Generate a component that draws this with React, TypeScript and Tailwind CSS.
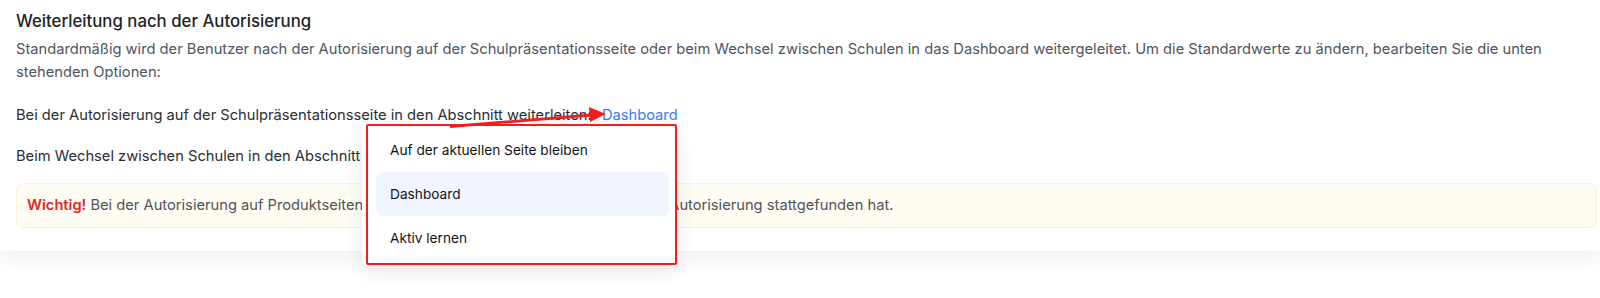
import { Fragment } from "react";

const font = { fontFamily: "Inter, 'Noto Sans', sans-serif" };

const options = ["Auf der aktuellen Seite bleiben", "Dashboard", "Aktiv lernen"];

// Dropdown menu with the red annotation frame around it.
function RedirectMenu() {
  return (
    <div className="absolute left-[362px] top-[124px] rounded-md bg-white pl-1 shadow-[0_6px_18px_rgba(30,40,80,0.10)]">
      <div className="w-[311px] rounded-[2px] border-2 border-[#f21d1d] bg-white pb-[3px] pl-2 pr-1.5 pt-[2px]">
        {options.map((o) => (
          <div
            key={o}
            className={
              "flex h-[44px] items-center rounded-md pl-[14px] text-[13.7px] text-[#141414] " +
              (o === "Dashboard" ? "bg-[#f0f5ff]" : "")
            }
          >
            {o}
          </div>
        ))}
      </div>
    </div>
  );
}

// Red annotation arrow pointing at the "Dashboard" link.
function Arrow() {
  return (
    <svg
      className="pointer-events-none absolute left-0 top-0"
      width="700"
      height="200"
      viewBox="0 0 700 200"
    >
      <line x1="450" y1="126.5" x2="592" y2="115" stroke="#f21d1d" strokeWidth="2.8" />
      <polygon points="606,114 589,107 590,122" fill="#f21d1d" />
    </svg>
  );
}

export default function App() {
  return (
    <div className="relative min-h-[298px] bg-white" style={font}>
      <div className="bg-white pb-[23px] pl-4 pr-[3px] pt-[9px] shadow-[0_10px_18px_rgba(40,50,110,0.06)]">
        <h2 className="text-[16.8px] font-medium leading-6 text-[#1f2329]">
          Weiterleitung nach der Autorisierung
        </h2>
        <p className="mt-[5px] text-[14.7px] leading-[23px] text-[#50555c]">
          Standardmäßig wird der Benutzer nach der Autorisierung auf der Schulpräsentationsseite oder
          beim Wechsel zwischen Schulen in das Dashboard weitergeleitet. Um die Standardwerte zu
          ändern, bearbeiten Sie die unten stehenden Optionen:
        </p>
        <p className="mt-[19px] text-[14.7px] leading-6 text-[#2b2e33]">
          Bei der Autorisierung auf der Schulpräsentationsseite in den Abschnitt weiterleiten:{" "}
          <span className="ml-[6px] text-[#3b7cf7]">Dashboard</span>
        </p>
        <p className="mt-[17px] text-[14.7px] leading-6 text-[#2b2e33]">
          Beim Wechsel zwischen Schulen in den Abschnitt weiterleiten:{" "}
          <span className="ml-[6px] text-[#3b7cf7]">Dashboard</span>
        </p>
        <div className="mt-[15px] rounded-lg border border-[#fbf1d6] bg-[#fffcf2] px-[10px] py-[10px] text-[14.7px] leading-[23px] text-[#50555c]">
          <span className="font-semibold text-[#e1252b]">Wichtig!</span> Bei der Autorisierung auf
          Produktseiten bleibt der Benutzer auf der Seite, in der die Autorisierung stattgefunden hat.
        </div>
      </div>
      <Fragment>
        <RedirectMenu />
        <Arrow />
      </Fragment>
    </div>
  );
}
